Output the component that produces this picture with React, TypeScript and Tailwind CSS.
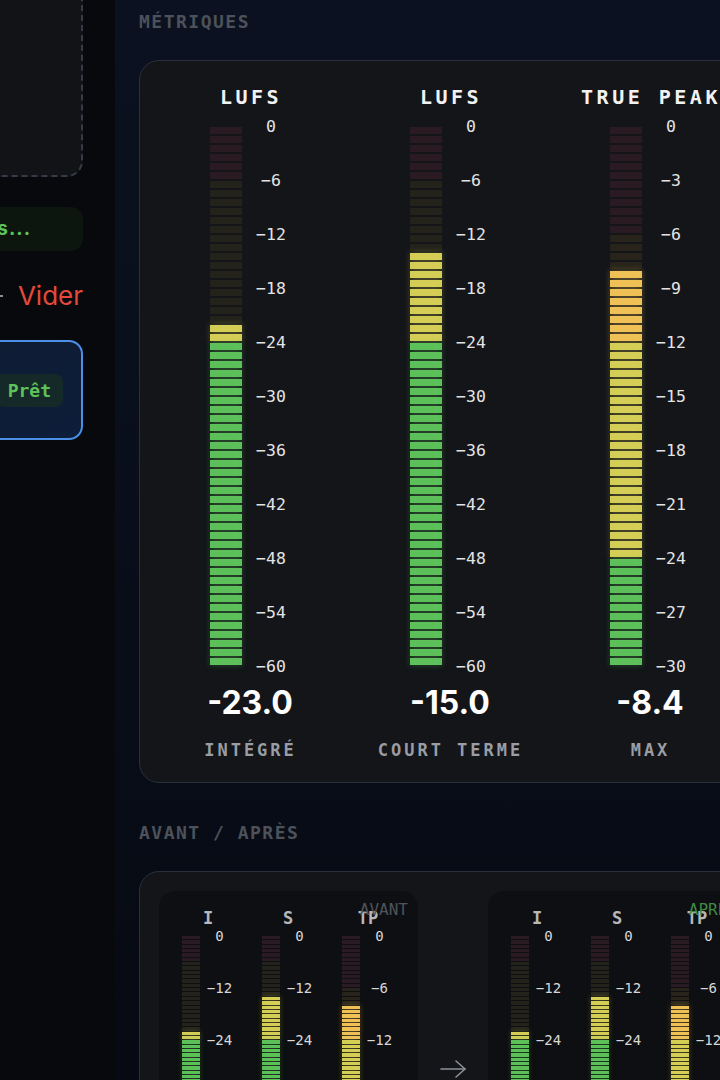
import React from 'react';

type Zone = 'red' | 'orange' | 'yellow' | 'green';

// classes des segments allumés / éteints
const LIT: Record<Zone, string> = {
  red: 'bg-[#e0524a] shadow-[0_0_6px_rgba(224,82,74,0.45)]',
  orange: 'bg-[#efc156] shadow-[0_0_6px_rgba(239,193,86,0.4)]',
  yellow: 'bg-[#d5ce56] shadow-[0_0_6px_rgba(213,206,86,0.35)]',
  green: 'bg-[#5dc05a] shadow-[0_0_6px_rgba(93,192,90,0.35)]',
};

const DIM: Record<Zone, string> = {
  red: 'bg-[#2a1b22]',
  orange: 'bg-[#28241b]',
  yellow: 'bg-[#23231b]',
  green: 'bg-[#172217]',
};

const MONO = "font-['DejaVu_Sans_Mono',monospace]";
const SANS = "font-['Inter',sans-serif]";

interface MeterDef {
  kind: 'lufs' | 'tp';
  value: number;
}

const SEGMENTS = 60;

const zoneOf = (i: number, kind: 'lufs' | 'tp'): Zone => {
  if (kind === 'lufs') {
    if (i < 6) return 'red';
    if (i < 24) return 'yellow';
    return 'green';
  }
  if (i < 12) return 'red';
  if (i < 24) return 'orange';
  if (i < 48) return 'yellow';
  return 'green';
};

const segmentList = ({ kind, value }: MeterDef) => {
  const step = kind === 'lufs' ? 1 : 0.5;
  return Array.from({ length: SEGMENTS }, (_, i) => {
    const zone = zoneOf(i, kind);
    const lit = value >= -(i + 1) * step;
    return lit ? LIT[zone] : DIM[zone];
  });
};

const BIG_TICKS = {
  lufs: ['0', '-6', '-12', '-18', '-24', '-30', '-36', '-42', '-48', '-54', '-60'],
  tp: ['0', '-3', '-6', '-9', '-12', '-15', '-18', '-21', '-24', '-27', '-30'],
};

const SMALL_TICKS = {
  lufs: ['0', '-12', '-24', '-36', '-48', '-60'],
  tp: ['0', '-6', '-12', '-18', '-24', '-30'],
};

const BigMeter: React.FC<{ title: string; label: string; meter: MeterDef }> = ({ title, label, meter }) => (
  <div className="flex w-[200px] shrink-0 flex-col items-center">
    <div className={`${MONO} whitespace-nowrap pl-[4px] text-[20px] font-bold leading-[28px] tracking-[3.5px] text-[#f2f2f2]`}>
      {title}
    </div>
    <div className="mt-4 flex gap-[11px] pl-[1px]">
      <div className="flex w-8 flex-col gap-[2px]">
        {segmentList(meter).map((cls, i) => (
          <div key={i} className={`h-[7px] w-full ${cls}`} />
        ))}
      </div>
      <div className="flex h-[540px] w-9 flex-col justify-between">
        {BIG_TICKS[meter.kind].map((t) => (
          <div key={t} className="flex h-0 items-center justify-center">
            <span className={`${MONO} text-[16.5px] leading-none text-[#e4e4e4]`}>{t.replace('-', '−')}</span>
          </div>
        ))}
      </div>
    </div>
    <div className={`${SANS} mt-4 pl-[2px] text-[32px] font-bold leading-[40px] text-white`}>{meter.value.toFixed(1)}</div>
    <div className={`${MONO} mt-[15px] pl-[3px] text-[17px] font-bold leading-[24px] tracking-[3px] text-[#9a9da3]`}>{label}</div>
  </div>
);

const SmallMeter: React.FC<{ title: string; meter: MeterDef }> = ({ title, meter }) => (
  <div className="flex w-20 shrink-0 flex-col items-center">
    <div className={`${MONO} pl-[2px] text-[17px] font-bold leading-[22px] text-[#b8b8b8]`}>{title}</div>
    <div className="mt-[7px] flex gap-[5px] pl-[2px]">
      <div className="flex h-[260px] w-[18px] flex-col gap-px">
        {segmentList(meter).map((cls, i) => (
          <div key={i} className={`w-full flex-1 ${cls}`} />
        ))}
      </div>
      <div className="flex h-[260px] w-[30px] flex-col justify-between">
        {SMALL_TICKS[meter.kind].map((t) => (
          <div key={t} className="flex h-0 items-center justify-center">
            <span className={`${MONO} text-[14px] leading-none text-[#d8d8d8]`}>{t.replace('-', '−')}</span>
          </div>
        ))}
      </div>
    </div>
    <div className={`${SANS} mt-2 text-[20px] font-bold leading-[28px] text-white`}>{meter.value.toFixed(1)}</div>
  </div>
);

const METERS: MeterDef[] = [
  { kind: 'lufs', value: -23.0 },
  { kind: 'lufs', value: -15.0 },
  { kind: 'tp', value: -8.4 },
];

const ComparePanel: React.FC<{ tag: string; tagClass: string }> = ({ tag, tagClass }) => (
  <div className="relative flex w-[259px] shrink-0 rounded-[16px] bg-[#0e0f12] pb-[15px] pl-2 pt-4">
    <span className={`${MONO} absolute right-[10px] top-[10px] text-[16px] leading-[18px] ${tagClass}`}>{tag}</span>
    <SmallMeter title="I" meter={METERS[0]} />
    <SmallMeter title="S" meter={METERS[1]} />
    <SmallMeter title="TP" meter={METERS[2]} />
  </div>
);

const Sidebar: React.FC = () => (
  <aside className="w-[115px] shrink-0 overflow-hidden bg-[#08090c]">
    <div className="ml-[-185px] flex w-[300px] flex-col pr-8">
      <div className="mt-[-20px] h-[197px] rounded-[16px] border-2 border-dashed border-[#353c48] bg-[#121317]" />
      <div className="mt-[30px] flex h-[44px] items-center justify-end rounded-[12px] bg-[#0c160f] pr-[52px]">
        <span className={`${SANS} whitespace-nowrap text-[19px] font-bold tracking-[1px] text-[#5ec25a]`}>Analyse en cours...</span>
      </div>
      <div className="mt-[28px] flex h-[34px] items-center justify-end gap-[15px]">
        <span className="h-[2px] w-[6px] bg-[#8a8d93]" />
        <span className={`${SANS} text-[26px] leading-none text-[#e4493b]`}>Vider</span>
      </div>
      <div className="mt-[27px] flex h-[100px] items-center justify-end rounded-[14px] border-2 border-[#4b8fe6] bg-linear-to-br from-[#0f1a30] to-[#0d1e3a] pr-[18px]">
        <span className={`${MONO} rounded-[8px] bg-[#152a28] px-3 py-[5px] text-[18px] font-bold leading-[23px] text-[#5ec25a]`}>
          Prêt
        </span>
      </div>
    </div>
  </aside>
);

export default function App() {
  return (
    <div className="flex h-[1080px] w-[720px] overflow-hidden bg-[#07090d]">
      <Sidebar />
      <main className="min-w-0 flex-1 overflow-hidden bg-linear-to-b from-[#0b1120] via-[#090e1a] to-[#070a12] pl-6">
        <h2 className={`${MONO} mt-[10px] text-[18px] font-bold leading-[24px] tracking-[1.5px] text-[#4c515a]`}>MÉTRIQUES</h2>
        <section className="mt-[26px] flex w-[780px] rounded-[20px] border border-[#29303b] bg-[#131519] pb-[20px] pl-[9px] pt-[22px]">
          <BigMeter title="LUFS" label="INTÉGRÉ" meter={METERS[0]} />
          <BigMeter title="LUFS" label="COURT TERME" meter={METERS[1]} />
          <BigMeter title="TRUE PEAK" label="MAX" meter={METERS[2]} />
        </section>

        <h2 className={`${MONO} mt-[38px] text-[18px] font-bold leading-[24px] tracking-[1.5px] text-[#4c515a]`}>AVANT / APRÈS</h2>
        <section className="mt-[26px] flex w-[780px] items-center rounded-[20px] border border-[#29303b] bg-[#131519] p-[19px]">
          <ComparePanel tag="AVANT" tagClass="text-[#4f535b]" />
          <div className="flex w-[70px] shrink-0 items-center justify-center">
            <svg width="28" height="20" viewBox="0 0 28 20" fill="none" stroke="#8d9096" strokeWidth="1.6" strokeLinecap="round" strokeLinejoin="round">
              <path d="M2 10h24" />
              <path d="M17 2l9 8-9 8" />
            </svg>
          </div>
          <ComparePanel tag="APRÈS" tagClass="text-[#3f8a42]" />
        </section>
      </main>
    </div>
  );
}
